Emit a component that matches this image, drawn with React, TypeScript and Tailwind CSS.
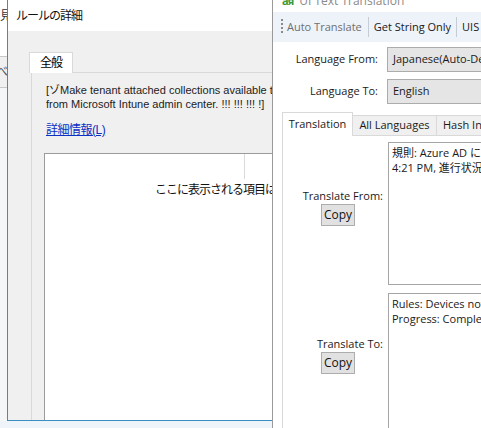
import React from 'react';

function RuleDialog() {
    return (
        <div className="absolute left-[7px] top-0 w-[266px] h-[421px] flex flex-col border-l border-b border-[#3b8fc0] bg-[#f0f0f0] overflow-hidden">
            {/* title bar */}
            <div className="h-[31px] shrink-0 bg-white flex items-center pl-[8px] text-[12px] tracking-[-1px] text-[#111]">ルールの詳細</div>

            <div className="flex-1 min-h-0 flex flex-col pl-[21px] pt-[21px]">
                <div className="relative z-10 -mb-px w-[44px] h-[21px] bg-white border border-b-0 border-[#d9d9d9] flex items-center justify-center text-[12px] tracking-[-1px]">全般</div>

                <div className="flex-1 min-h-0 ml-[2px] border-l border-t border-[#d9d9d9] flex flex-col pl-[12px] pt-[10px]">
                    <div className="pl-[2px] text-[11px] leading-[14px] whitespace-nowrap text-[#222]">
                        <p>[ゾMake tenant attached collections available to all</p>
                        <p>from Microsoft Intune admin center. !!! !!! !!! !]</p>
                    </div>
                    <a className="pl-[2px] mt-[12px] text-[12px] leading-[14px] text-[#0c2fc4] underline tracking-[-0.5px]">詳細情報(L)</a>

                    <div className="flex-1 mt-[16px] bg-white border-l border-t border-[#9b9b9b] flex flex-col">
                        <div className="w-[200px] h-[25px] border-r border-[#dadada]" />
                        <p className="pl-[110px] pt-[4px] text-[12px] leading-[14px] tracking-[-1px] whitespace-nowrap text-[#111]">ここに表示される項目はありません</p>
                    </div>
                </div>
            </div>
        </div>
    );
}

function CopyButton() {
    return (
        <button className="mt-[1px] mr-[28px] w-[34px] h-[22px] bg-[#e1e1e1] border border-[#adadad] text-[12px] leading-none text-[#111]">Copy</button>
    );
}

function TranslatorWindow() {
    return (
        <div className="absolute left-[272px] top-0 w-[330px] h-[428px] border-l border-[#9a9a9a] bg-white flex flex-col overflow-hidden font-['Open_Sans','Noto_Sans_CJK_JP',sans-serif] text-[11px] text-[#1a1a1a]">
            {/* title, mostly scrolled out of view */}
            <div className="h-[12px] shrink-0 overflow-hidden">
                <div className="-mt-[9px] h-[20px] flex items-center pl-[9px] gap-[6px]">
                    <span className="text-[11px] font-bold text-[#3a9a3a] tracking-[-1px]">aя</span>
                    <span className="text-[12px] text-[#8a8a8a]">UI Text Translation</span>
                </div>
            </div>

            {/* toolbar */}
            <div className="h-[30px] shrink-0 bg-[#eef2f9] flex items-center pl-[8px] whitespace-nowrap">
                <svg width="2" height="16" viewBox="0 0 2 16" className="shrink-0">
                    <rect x="0" y="0" width="2" height="2" fill="#8a8a8a" />
                    <rect x="0" y="4" width="2" height="2" fill="#8a8a8a" />
                    <rect x="0" y="8" width="2" height="2" fill="#8a8a8a" />
                    <rect x="0" y="12" width="2" height="2" fill="#8a8a8a" />
                </svg>
                <span className="ml-[4px] text-[#6f6f6f]">Auto Translate</span>
                <div className="ml-[6px] w-px h-[20px] bg-[#c5ccd6]" />
                <span className="ml-[5px]">Get String Only</span>
                <div className="ml-[5px] w-px h-[20px] bg-[#c5ccd6]" />
                <span className="ml-[5px]">UIS</span>
            </div>

            {/* language rows */}
            <div className="mt-[5px] flex items-center h-[25px] shrink-0">
                <span className="w-[105px] shrink-0 text-right">Language From:</span>
                <div className="ml-[9px] w-[160px] shrink-0 h-[25px] bg-[#e5e5e5] border border-[#acacac] flex items-center pl-[5px] whitespace-nowrap">Japanese(Auto-Detect)</div>
            </div>
            <div className="mt-[7px] flex items-center h-[25px] shrink-0">
                <span className="w-[105px] shrink-0 text-right">Language To:</span>
                <div className="ml-[9px] w-[160px] shrink-0 h-[25px] bg-[#e5e5e5] border border-[#acacac] flex items-center pl-[5px]">English</div>
            </div>

            {/* tabs */}
            <div className="mt-[8px] ml-[9px] flex items-end shrink-0 whitespace-nowrap">
                <div className="relative z-10 -mb-px w-[71px] h-[24px] shrink-0 bg-white border border-b-0 border-[#d9d9d9] flex items-center justify-center">Translation</div>
                <div className="w-[84px] h-[20px] shrink-0 bg-[#f0f0f0] border border-l-0 border-b-0 border-[#d9d9d9] flex items-center justify-center">All Languages</div>
                <div className="w-[70px] h-[20px] shrink-0 bg-[#f0f0f0] border border-l-0 border-b-0 border-[#d9d9d9] flex items-center pl-[6px]">Hash Info</div>
            </div>

            <div className="flex-1 ml-[9px] border-l border-t border-[#d9d9d9] flex flex-col pt-[6px]">
                <div className="flex shrink-0">
                    <div className="w-[105px] shrink-0 flex flex-col items-end pr-[5px] pt-[46px]">
                        <span className="leading-[15px]">Translate From:</span>
                        <CopyButton />
                    </div>
                    <div className="w-[200px] shrink-0 h-[143px] border border-[#a5a5a5] pl-[3px] pt-[2px] leading-[15px] whitespace-nowrap overflow-hidden">
                        <p>規則: Azure AD に参加しているデバイス</p>
                        <p>4:21 PM,  進行状況: 完了</p>
                    </div>
                </div>
                <div className="mt-[8px] flex shrink-0">
                    <div className="w-[105px] shrink-0 flex flex-col items-end pr-[5px] pt-[43px]">
                        <span className="leading-[15px]">Translate To:</span>
                        <CopyButton />
                    </div>
                    <div className="w-[200px] shrink-0 h-[143px] border border-[#a5a5a5] pl-[3px] pt-[2px] leading-[15px] whitespace-nowrap overflow-hidden">
                        <p>Rules: Devices not joined to Azure AD</p>
                        <p>Progress: Completed</p>
                    </div>
                </div>
            </div>
        </div>
    );
}

export default function App() {
    return (
        <div className="relative w-[481px] h-[428px] overflow-hidden bg-[#eef4fa] font-['Liberation_Sans','Noto_Sans_CJK_JP',sans-serif] text-black">
            {/* edge of the window behind */}
            <div className="absolute left-0 top-0 w-[8px] h-[421px] flex flex-col bg-[#f4f6f8] overflow-hidden">
                <div className="h-[57px] shrink-0 bg-white border-b border-[#c8c8c8] pt-[7px] text-[12px] text-[#333]">見</div>
                <div className="h-[31px] shrink-0 bg-[#f0f0f0] border-b border-[#c8c8c8] flex items-center -ml-[4px] text-[12px] text-[#555]">べ</div>
                <div className="flex-1 border-r border-[#a9cbe8]" />
            </div>
            <RuleDialog />
            <TranslatorWindow />
        </div>
    );
}
